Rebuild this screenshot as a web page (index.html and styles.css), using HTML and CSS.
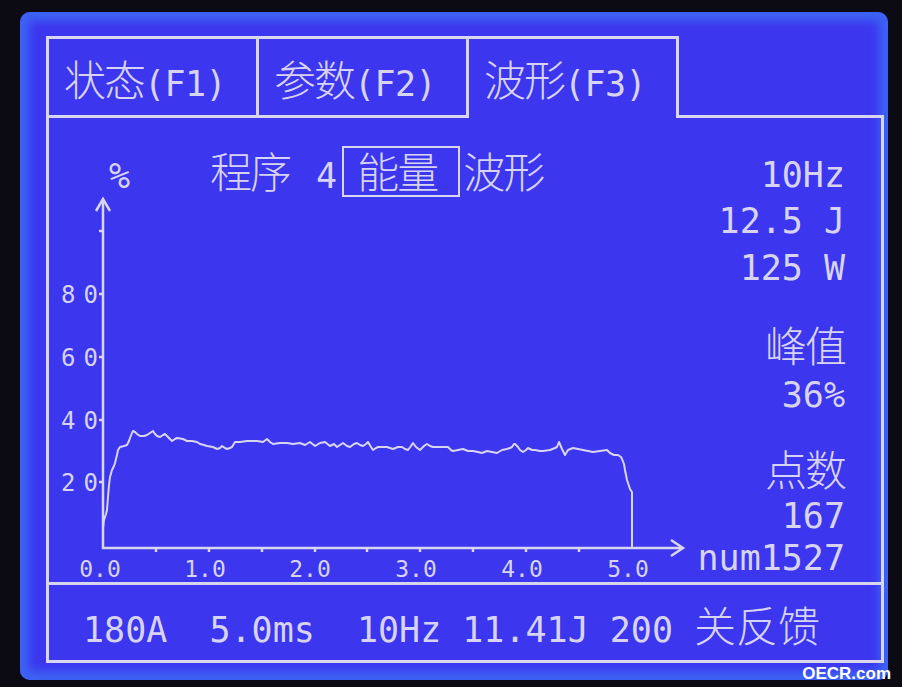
FILE: index.html
```html
<!DOCTYPE html>
<html lang="zh-CN">
<head>
<meta charset="utf-8">
<title>波形</title>
<link rel="stylesheet" href="styles.css">
</head>
<body>
<div class="frame">
  <div class="screen">
    <div class="panel">
      <div class="tabs">
        <div class="tab"><span class="c">状态</span><span class="l">(F1)</span></div>
        <div class="tab"><span class="c">参数</span><span class="l">(F2)</span></div>
        <div class="tab active"><span class="c">波形</span><span class="l">(F3)</span></div>
        <div class="tab-fill"></div>
      </div>
      <div class="body">
        <div class="main">
          <div class="chart-col">
            <div class="title">
              <span class="l pct">%</span>
              <span class="c t-prog">程序</span>
              <span class="l t-num">4</span>
              <span class="boxed"><span class="c">能量</span></span>
              <span class="c t-wave">波形</span>
            </div>
            <svg class="chart" width="643" height="384" viewBox="49 198 643 384" xmlns="http://www.w3.org/2000/svg">
              <g class="axis">
                <line x1="103" y1="199" x2="103" y2="549"/>
                <line x1="102" y1="548" x2="683" y2="548"/>
                <polyline points="96,211 103,199 110,211"/>
                <polyline points="671,540 683,548 671,556"/>
                <line x1="99" y1="231" x2="103" y2="231"/>
                <line x1="99" y1="294" x2="103" y2="294"/>
                <line x1="99" y1="357" x2="103" y2="357"/>
                <line x1="99" y1="420" x2="103" y2="420"/>
                <line x1="99" y1="482" x2="103" y2="482"/>
                <line x1="156" y1="548" x2="156" y2="552"/>
                <line x1="209" y1="548" x2="209" y2="552"/>
                <line x1="262" y1="548" x2="262" y2="552"/>
                <line x1="315" y1="548" x2="315" y2="552"/>
                <line x1="367" y1="548" x2="367" y2="552"/>
                <line x1="420" y1="548" x2="420" y2="552"/>
                <line x1="473" y1="548" x2="473" y2="552"/>
                <line x1="526" y1="548" x2="526" y2="552"/>
                <line x1="579" y1="548" x2="579" y2="552"/>
              </g>
              <g class="ylab">
                <text x="61" y="303">80</text>
                <text x="61" y="366">60</text>
                <text x="61" y="429">40</text>
                <text x="61" y="491">20</text>
              </g>
              <g class="xlab">
                <text x="100" y="577">0.0</text>
                <text x="205" y="577">1.0</text>
                <text x="310" y="577">2.0</text>
                <text x="416" y="577">3.0</text>
                <text x="522" y="577">4.0</text>
                <text x="628" y="577">5.0</text>
              </g>
              <polyline class="wave" points="103,528 104,520 105,517 106,514 107,510 108,497 109,485 110,477 112,470 114,466 115,463 117,455 118,450 120,447 124,446 127,445 129,441 130,438 132,433 133,431 135,432 137,434 140,436 144,436 147,435 150,433 153,431 155,434 157,436 160,437 163,435 165,434 168,437 170,439 172,441 175,439 177,438 183,439 187,441 192,441 197,442 200,444 204,445 207,446 213,447 217,449 220,448 222,446 225,448 227,449 230,448 232,447 235,442 240,442 247,441 257,441 263,442 267,439 270,442 273,444 280,443 287,443 293,444 300,443 305,445 310,442 315,446 320,443 325,442 330,446 334,444 337,447 340,445 343,443 347,446 350,447 354,444 357,443 360,445 363,446 366,444 368,442 371,447 373,450 376,448 378,447 387,447 390,448 393,449 398,447 402,447 405,449 408,450 411,446 413,443 416,447 420,450 424,446 427,444 430,446 433,447 448,447 451,450 453,451 458,450 463,449 468,451 473,451 478,452 482,453 487,451 492,452 497,453 502,450 507,449 510,448 512,447 514,444 515,444 518,447 520,450 523,452 526,450 528,448 532,450 535,450 540,451 543,451 550,450 555,448 557,447 559,442 562,449 565,455 568,450 573,448 578,449 583,450 588,451 593,452 600,451 607,450 610,453 614,455 618,455 621,457 622,459 624,464 625,470 626,475 627,480 629,486 630,489 632,492 632,548"/>
            </svg>
          </div>
          <div class="info">
            <span class="l i-hz">10Hz</span>
            <span class="l i-j">12.5 J</span>
            <span class="l i-w">125 W</span>
            <span class="c i-peak">峰值</span>
            <span class="l i-pct">36%</span>
            <span class="c i-pts">点数</span>
            <span class="l i-n">167</span>
            <span class="l i-num">num1527</span>
          </div>
        </div>
        <div class="status">
          <span class="l">180A  5.0ms  10Hz 11.41J 200 </span><span class="c wide">关反馈</span>
        </div>
      </div>
    </div>
  </div>
  <div class="watermark">OECR.com</div>
</div>
</body>
</html>
```

FILE: styles.css
```css
html, body {
  margin: 0;
  padding: 0;
  background: #0c0b14;
}

.frame {
  position: relative;
  width: 902px;
  height: 687px;
  box-sizing: border-box;
  padding: 12px 0 0 20px;
  overflow: hidden;
  background: #0c0b14;
  color: #d6d4f2;
}

.screen {
  width: 868px;
  height: 668px;
  box-sizing: border-box;
  padding: 24px 0 0 26px;
  border-radius: 10px;
  background: #3c36ee;
  box-shadow: inset 0 0 10px 9px #3d64f4;
}

.panel {
  width: 838px;
}

.l {
  font-family: "DejaVu Sans Mono", monospace;
  font-size: 35px;
  line-height: 35px;
  white-space: pre;
}

.c {
  font-family: "Noto Sans CJK SC", sans-serif;
  font-weight: 300;
  font-size: 42px;
  line-height: 42px;
  letter-spacing: -2px;
  white-space: pre;
}

/* tabs */
.tabs {
  display: flex;
  height: 82px;
}

.tab {
  box-sizing: border-box;
  height: 82px;
  width: 210px;
  display: flex;
  align-items: baseline;
  padding: 18px 0 0 15px;
  border-top: 3px solid #d8d6ee;
  border-left: 3px solid #d8d6ee;
  border-bottom: 3px solid #d8d6ee;
}

.tab .l {
  letter-spacing: -0.6px;
}

.tab.active {
  width: 213px;
  border-right: 3px solid #d8d6ee;
  border-bottom: none;
}

.tab-fill {
  flex: 1;
  height: 82px;
  box-sizing: border-box;
  border-bottom: 3px solid #d8d6ee;
}

/* body */
.body {
  box-sizing: border-box;
  height: 545px;
  border-left: 3px solid #d8d6ee;
  border-right: 3px solid #d8d6ee;
  border-bottom: 3px solid #d8d6ee;
}

.main {
  display: flex;
  height: 464px;
}

.chart-col {
  width: 643px;
  display: flex;
  flex-direction: column;
}

.title {
  box-sizing: border-box;
  height: 80px;
  padding-top: 28px;
  display: flex;
  align-items: baseline;
}

.pct { margin-left: 60px; }
.t-prog { margin-left: 80px; }
.t-num { margin-left: 26px; }

.boxed {
  display: block;
  margin-left: 5px;
  padding: 1px 21px 3px 13px;
  border: 2px solid #d8d6ee;
}

.t-wave { margin-left: 3px; }

.chart {
  display: block;
  overflow: visible;
}

.axis line,
.axis polyline {
  stroke: #d8d6ee;
  stroke-width: 2.5;
  fill: none;
}

.wave {
  stroke: #d8d6ee;
  stroke-width: 2;
  fill: none;
  stroke-linejoin: round;
}

.ylab text {
  font-family: "DejaVu Sans Mono", monospace;
  font-size: 24px;
  letter-spacing: 8px;
  fill: #d6d4f2;
}

.xlab text {
  font-family: "DejaVu Sans Mono", monospace;
  font-size: 23px;
  text-anchor: middle;
  fill: #d6d4f2;
}

/* right info column */
.info {
  flex: 1;
  display: flex;
  flex-direction: column;
  align-items: flex-end;
  padding-right: 36px;
}

.i-hz { margin-top: 40px; }
.i-j { margin-top: 11px; }
.i-w { margin-top: 12px; }
.i-peak { margin-top: 37px; }
.i-pct { margin-top: 13px; }
.i-pts { margin-top: 34px; }
.i-n { margin-top: 10px; }
.i-num { margin-top: 7px; }

/* status bar */
.status {
  box-sizing: border-box;
  height: 78px;
  border-top: 3px solid #d8d6ee;
  display: flex;
  align-items: baseline;
  padding: 18px 0 0 34px;
}

.status .wide {
  letter-spacing: 0;
}

.watermark {
  position: absolute;
  right: 11px;
  top: 665px;
  font-family: "Liberation Sans", Arial, sans-serif;
  font-weight: bold;
  font-size: 17px;
  line-height: 17px;
  color: #ffffff;
}
```
